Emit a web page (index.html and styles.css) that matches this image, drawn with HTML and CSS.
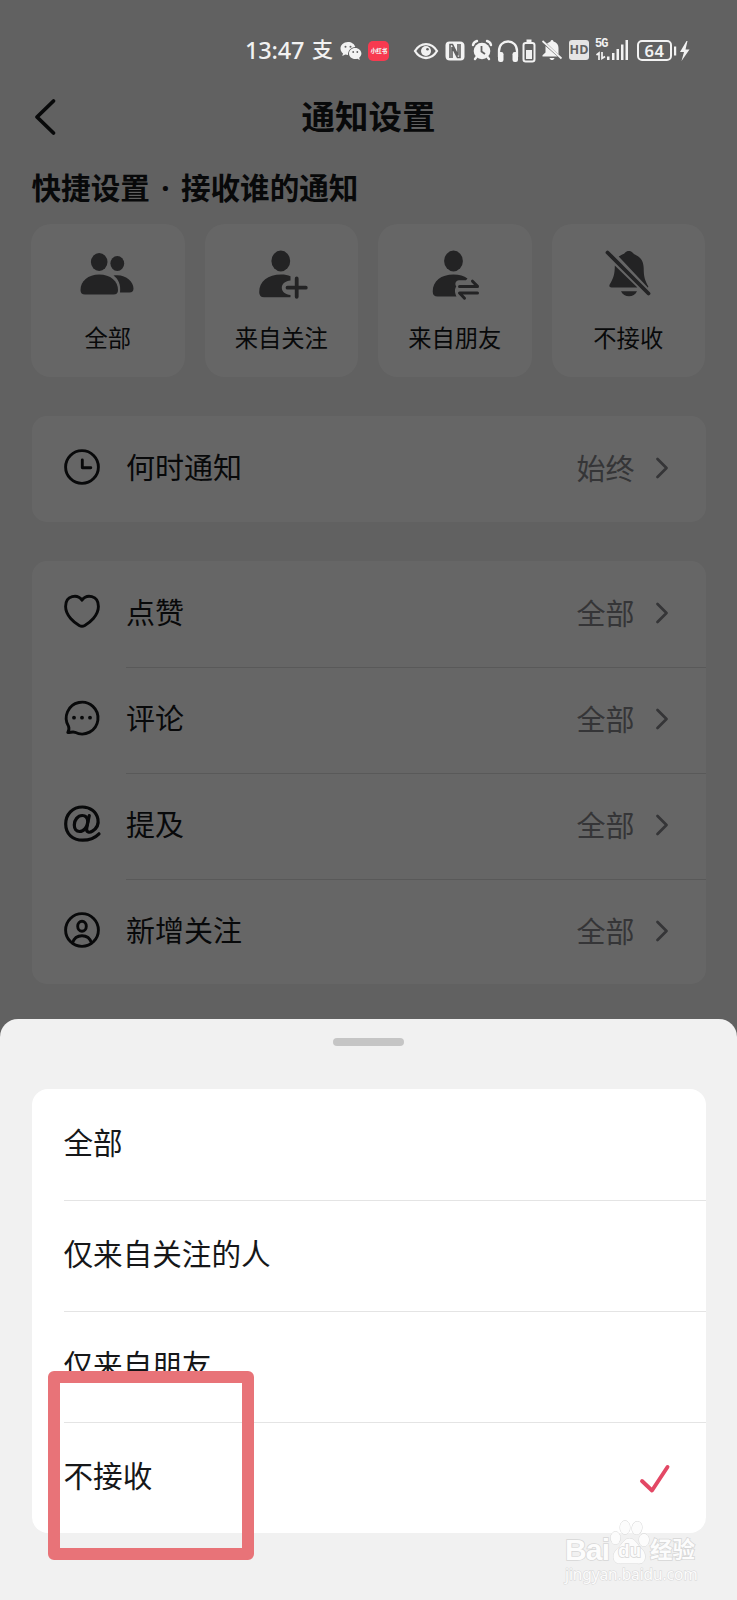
FILE: index.html
```html
<!DOCTYPE html>
<html lang="zh-CN">
<head>
<meta charset="utf-8">
<title>通知设置</title>
<link rel="stylesheet" href="styles.css">
</head>
<body>
<main class="screen">
  <div class="page">
    <header class="nav">
      <svg class="back" width="22" height="38" viewBox="0 0 22 38"><path d="M19.500 3 3 19l16.500 16"/></svg>
      <h1 class="title">通知设置</h1>
    </header>
    <h2 class="section">快捷设置<span class="dot">·</span>接收谁的通知</h2>
    <div class="quick">
      <div class="tile">
        <svg class="glyph" width="60" height="56" viewBox="0 0 60 56">
          <ellipse cx="22.200" cy="17" rx="8.300" ry="9"/><ellipse cx="40.300" cy="18.500" rx="6.900" ry="7.600"/>
          <path d="M22.200 29.500C11 29.500 3.500 36 3.500 45q0 4.500 4.500 4.500h28.500q4.500 0 4.500-4.500C41 36 33.500 29.500 22.200 29.500Z"/>
          <path d="M36.500 30.500C48 28.500 56.500 36 56.500 43.500q0 4-4 4h-9.500c1-7.500-1.500-13.500-6.500-17Z"/>
        </svg>
        <span class="tile-label">全部</span>
      </div>
      <div class="tile">
        <svg class="glyph" width="60" height="56" viewBox="0 0 60 56">
          <ellipse cx="29.800" cy="16" rx="9.400" ry="10.400"/>
          <path d="M30 29.500c4 0 7 .6 9.500 1.800v4.200c-5 .5-8.700 3.300-8.700 7.200s3.700 6.800 8.700 7.300v2.200H13q-4.800 0-4.800-5C8.200 36 17 29.500 30 29.500Z"/>
          <path class="line" d="M36.500 42.700h18.300M45.700 33.500v18.300"/>
        </svg>
        <span class="tile-label">来自关注</span>
      </div>
      <div class="tile">
        <svg class="glyph" width="60" height="56" viewBox="0 0 60 56">
          <ellipse cx="29.500" cy="16" rx="9.400" ry="10.400"/>
          <path d="M29.500 29.500c6 0 10.500 1.500 14 4l-1.500 1.800h-7c-3.500 0-4.500 4-2.700 6.200-2 2.500-1.500 6.500.2 10H13.500q-4.800 0-4.800-5c0-10.500 8.500-17 20.800-17Z"/>
          <path class="thin" d="M35.500 41.400h18l-5-5.200M53.500 48h-18l5 5.200"/>
        </svg>
        <span class="tile-label">来自朋友</span>
      </div>
      <div class="tile">
        <svg class="glyph" width="60" height="56" viewBox="0 0 60 56">
          <path d="M20.700 11.500c3-1.900 5-2.300 6.300-3.800 1.700-2.300 6-2.300 7.700 0 1 1.300 2 1.900 4 2.700 4.700 2.300 7 7 7 12.800 0 8 1 11.800 4.600 18.300l-.3 1.200ZM16.800 20.500l22.600 22H13.500c-2 0-2.700-1.500-1.700-3.200 3.600-6 5-9.800 5-18.800ZM23 46.300h16c-1.500 3.300-4.500 5-8 5s-6.500-1.700-8-5Z"/>
          <path class="line" d="M9.500 7.500l41 41"/>
        </svg>
        <span class="tile-label">不接收</span>
      </div>
    </div>
    <section class="group">
      <div class="row">
        <svg class="icon" width="38" height="38" viewBox="0 0 38 38"><circle cx="19" cy="19" r="16.400"/><path d="M19.300 12v7.800h8.500"/></svg>
        <div class="row-body"><span>何时通知</span><span class="value">始终</span><svg class="chevron" width="14" height="24" viewBox="0 0 14 24"><path d="M2.500 3l9 9-9 9"/></svg></div>
      </div>
    </section>
    <section class="group">
      <div class="row">
        <svg class="icon" width="38" height="38" viewBox="0 0 38 38"><path d="M19 7.200C14.500.8 2.600 2 2.600 13.500c0 9.300 9 16.300 13.600 19q2.800 1.600 5.600 0c4.600-2.700 13.600-9.700 13.600-19C35.400 2 23.500.8 19 7.200Z"/></svg>
        <div class="row-body"><span>点赞</span><span class="value">全部</span><svg class="chevron" width="14" height="24" viewBox="0 0 14 24"><path d="M2.500 3l9 9-9 9"/></svg></div>
      </div>
      <div class="row">
        <svg class="icon" width="38" height="38" viewBox="0 0 38 38"><path d="M4.800 33.600c1.300-2.200 1.600-4 .7-6.300A15.900 15.900 0 1 1 12 33.300c-2.300-.9-4.500.3-7.200.3Z"/><g class="dots"><circle cx="11" cy="18.700" r="1.900"/><circle cx="19" cy="18.700" r="1.900"/><circle cx="27" cy="18.700" r="1.900"/></g></svg>
        <div class="row-body"><span>评论</span><span class="value">全部</span><svg class="chevron" width="14" height="24" viewBox="0 0 14 24"><path d="M2.500 3l9 9-9 9"/></svg></div>
      </div>
      <div class="row">
        <svg class="icon at" width="38" height="38" viewBox="0 0 38 38"><path d="M26.300 10.500l-2.600 12.700c-.7 4.500 3 4.800 5.700 3 4-2.600 6.500-7.300 5.500-12.200C33.500 6.500 27 2 19.500 2 9.500 2 2.700 9.500 2.700 19c0 10 7 16.200 17 16.200 6.500 0 12-2 16.300-6.400"/><path d="M24.800 16.500c-.3-3.800-2.500-6-5.500-6-4.600 0-8 4.500-8 9.500 0 4 2 6.500 5.200 6.500 4.300 0 8-4.300 8.300-10Z"/></svg>
        <div class="row-body"><span>提及</span><span class="value">全部</span><svg class="chevron" width="14" height="24" viewBox="0 0 14 24"><path d="M2.500 3l9 9-9 9"/></svg></div>
      </div>
      <div class="row">
        <svg class="icon" width="38" height="38" viewBox="0 0 38 38"><circle cx="19" cy="19" r="16.400"/><ellipse cx="19" cy="15.300" rx="4.300" ry="5"/><path d="M9.500 32c1.500-5 4.500-7.300 9.500-7.300s8 2.300 9.500 7.300"/></svg>
        <div class="row-body"><span>新增关注</span><span class="value">全部</span><svg class="chevron" width="14" height="24" viewBox="0 0 14 24"><path d="M2.500 3l9 9-9 9"/></svg></div>
      </div>
    </section>
  </div>
  <div class="dim"></div>

  <div class="status">
    <span class="time">13:47</span>
    <span class="pay">支</span>
    <svg class="wechat" width="22" height="20" viewBox="0 0 22 20"><path fill="#f2f2f2" d="M8 1C3.500 1 .5 4 .5 7.500c0 2 1 3.700 2.500 4.900l-.7 2.600 3-1.400c.8.300 1.800.4 2.700.4C7.800 9.500 11 6.200 15.300 6 14.500 3 11.500 1 8 1Z"/><path fill="#f2f2f2" d="M15.200 7C11.500 7 9 9.500 9 12.500S11.700 18 15.200 18c.8 0 1.500-.1 2.200-.3l2.400 1.200-.6-2.200c1.300-1 2.200-2.500 2.200-4.200C21.400 9.500 18.700 7 15.200 7Z"/><g fill="#616161"><circle cx="5.500" cy="5.800" r="1"/><circle cx="10.500" cy="5.800" r="1"/><circle cx="13.200" cy="11" r=".9"/><circle cx="17.300" cy="11" r=".9"/></g></svg>
    <span class="app"><span class="app-text">小红书</span></span>
    <svg class="eye" width="26" height="20" viewBox="0 0 26 20"><path fill="none" stroke="#f2f2f2" stroke-width="2.300" d="M2 10C7.500.7 18.500.7 24 10c-5.500 9.300-16.500 9.300-22 0Z"/><circle cx="13" cy="10" r="5" fill="#f2f2f2"/><circle cx="14.500" cy="8.300" r="1.300" fill="#616161"/></svg>
    <svg class="nfc" width="20" height="20" viewBox="0 0 20 20"><path fill="#f2f2f2" d="M4.500.5H15q4.500 0 4.500 4.500v10.500q0 4-4 4H5Q.5 19.500.5 15V4.500q0-4 4-4Z"/><path fill="none" stroke="#616161" stroke-width="1.600" d="M5 17V3.500h2.500l5.500 11V3M15 3v13.500h-2.500L7 6v11"/></svg>
    <svg class="alarm" width="22" height="22" viewBox="0 0 22 22"><circle cx="11" cy="12" r="8.300" fill="#f2f2f2"/><path fill="none" stroke="#f2f2f2" stroke-width="2.400" stroke-linecap="round" d="M2 6C2.500 4 4 2.500 6 2M20 6c-.5-2-2-3.500-4-4M5.500 18 4 20M16.500 18l1.500 2"/><path fill="none" stroke="#616161" stroke-width="1.800" d="M10.500 7v5.500l3.500 2.500"/></svg>
    <svg class="phones" width="22" height="24" viewBox="0 0 22 24"><path fill="none" stroke="#f2f2f2" stroke-width="2.300" d="M2 18v-6C2 6 6 2.500 11 2.500S20 6 20 12v6"/><rect x="1" y="13" width="5.500" height="10" rx="2.200" fill="#f2f2f2"/><rect x="15.500" y="13" width="5.500" height="10" rx="2.200" fill="#f2f2f2"/></svg>
    <svg class="cell" width="14" height="24" viewBox="0 0 14 24"><rect x="1.500" y="4" width="11" height="18.500" rx="2.200" fill="none" stroke="#f2f2f2" stroke-width="2"/><path fill="#f2f2f2" d="M4.500.5h5V3h-5zM4 11h6v9H4z"/></svg>
    <svg class="mute" width="22" height="22" viewBox="0 0 22 22"><path fill="#f2f2f2" d="M6 4.500 9.500 2.500C9.800.5 12.200.5 12.500 2.500 16 3.500 17.500 6 17.500 9v6.500ZM4.500 7l12 10.500h-15v-1.300l3-2.700ZM8.500 19h5c-.8 2.700-4.200 2.700-5 0Z"/><path stroke="#f2f2f2" stroke-width="1.700" d="M1.500 2l19 17.500"/></svg>
    <span class="hd">HD</span>
    <span class="network"><span class="fiveg">5G</span><svg width="34" height="22" viewBox="0 0 34 22"><path fill="#f2f2f2" d="M12 17.500h2.500V21H12zM17 14h2.500v7H17zM21.500 10H24v11h-2.500zM26 5.500h2.500V21H26zM30.500 1H33v20h-2.500z"/><path fill="none" stroke="#f2f2f2" stroke-width="1.700" d="M1.500 16 4 14v7M7 13v6.500l3-2"/></svg></span>
    <span class="battery">64</span>
    <svg class="bolt" width="16" height="22" viewBox="0 0 16 22"><path fill="#f2f2f2" d="M0 6.500h2.200v9H0zM12.500 1 6 12h4L7.500 21 15.500 9.500h-4L13.500 1Z"/></svg>
  </div>

  <section class="sheet">
    <div class="handle"></div>
    <div class="options">
      <div class="option">全部</div>
      <div class="option">仅来自关注的人</div>
      <div class="option">仅来自朋友</div>
      <div class="option">不接收<svg class="check" width="32" height="30" viewBox="0 0 32 30"><path d="M3 17l10 9.500L28.500 3"/></svg></div>
    </div>
  </section>
  <div class="highlight"></div>
  <div class="watermark">
    <div class="brand"><span class="bai">Bai</span><span class="paw"><svg width="40" height="46" viewBox="0 0 40 46"><g fill="#fcfcfc" stroke="#d9d9d9"><ellipse cx="5.500" cy="19" rx="4.800" ry="6.300"/><ellipse cx="15" cy="8.500" rx="5" ry="6.800"/><ellipse cx="27" cy="9" rx="5" ry="6.500" transform="rotate(10 27 9)"/><ellipse cx="34" cy="21" rx="5" ry="6.300"/><path d="M19.500 19.500c5 0 7 4.500 10 8s6 5.500 5.500 11-4 6.500-8 6H12c-5 .5-8-1.500-8.500-6s3-8 6-11 5-8 10-8Z"/></g></svg><span class="du">du</span></span><span class="cn">经验</span></div>
    <div class="url">jingyan.baidu.com</div>
  </div>
</main>
</body>
</html>
```
FILE: styles.css
```css
* { box-sizing: border-box; }
body { margin: 0; font-family: "Noto Sans CJK SC", sans-serif; }
svg { display: block; flex: none; overflow: visible; }

.screen { position: relative; width: 737px; height: 1600px; overflow: hidden; background: #f2f2f2; color: #161719; }
.page { height: 1600px; padding: 87px 31.500px 0 31.500px; }
.dim { position: absolute; inset: 0; background: rgba(0, 0, 0, .6); }

.nav { display: grid; grid-template-columns: 60px 1fr 60px; align-items: center; height: 60px; }
.back { margin-left: 2.500px; margin-bottom: 1px; fill: none; stroke: #161719; stroke-width: 3.800; stroke-linecap: round; stroke-linejoin: round; }
.title { margin: 0; padding-bottom: 4px; text-align: center; font-size: 33.500px; line-height: 56px; font-weight: 700; }
.section { margin: 17px 0 0; height: 46px; line-height: 46px; font-size: 29.600px; font-weight: 700; }
.dot { display: inline-block; width: 31px; font-family: "Noto Sans", sans-serif; line-height: 1; text-align: center; }

.quick { display: grid; grid-template-columns: repeat(4, 1fr); gap: 20px; margin: 14px .5px 0 -.5px; }
.tile { display: flex; flex-direction: column; align-items: center; height: 153px; padding-top: 21px; border-radius: 20px; background: #fff; }
.glyph { margin-left: -1px; margin-bottom: 18px; fill: #57575b; }
.glyph .line, .glyph .thin { fill: none; stroke: #57575b; stroke-width: 3.800; stroke-linecap: round; stroke-linejoin: round; }
.glyph .thin { stroke-width: 3; }
.tile-label { font-size: 23.300px; line-height: 36px; }

.group { margin-top: 39px; border-radius: 15px; background: #fff; overflow: hidden; }
.row { display: flex; align-items: center; height: 105.900px; padding-left: 31.500px; }
.icon { margin-bottom: 3px; fill: none; stroke: #161719; stroke-width: 2.900; stroke-linecap: round; stroke-linejoin: round; }
.icon.at { stroke-width: 3.200; }
.dots { fill: #161719; stroke: none; }
.row-body { display: flex; align-items: center; flex: 1; height: 100%; margin-left: 25px; padding: 0 37px 6px 0; font-size: 29px; }
.row + .row .row-body { border-top: 1px solid #dedede; }
.value { margin-left: auto; margin-right: 20px; padding-top: 2px; color: #85868a; }
.chevron { margin-top: 4px; fill: none; stroke: #85868a; stroke-width: 2.800; stroke-linecap: round; stroke-linejoin: round; }

.status { position: absolute; top: 30px; left: 245px; display: flex; align-items: center; height: 41px; color: #f2f2f2; }
.time { width: 67px; font: 500 23.500px/41px "Noto Sans", sans-serif; letter-spacing: -.2px; }
.pay { width: 28px; padding-bottom: 5px; font-size: 21px; line-height: 36px; font-weight: 500; }
.app { display: flex; align-items: center; justify-content: center; width: 21px; height: 20px; margin-left: 6px; border-radius: 5px; background: #f83a50; }
.app-text { flex: none; font-size: 12px; line-height: 18px; font-weight: 900; transform: scale(.46); }
.eye { margin-left: 24px; }
.nfc { margin-left: 6px; }
.alarm { margin-left: 6px; margin-bottom: 1px; }
.phones { margin-left: 4px; }
.cell { margin-left: 3px; }
.mute { margin-left: 5px; margin-bottom: 2px; }
.hd { width: 20px; height: 20px; margin-left: 6px; margin-bottom: 2px; border-radius: 3px; background: #e5e5e5; color: #616161; font: 700 12.500px/20px "Open Sans", sans-serif; text-align: center; }
.network { position: relative; margin-left: 6px; margin-bottom: 2px; }
.fiveg { position: absolute; left: 0; top: -1px; font: 700 12px/12px "Liberation Mono", monospace; letter-spacing: -1px; }
.battery { width: 35px; height: 21px; margin-left: 8px; border: 2px solid #f2f2f2; border-radius: 5px; font: 600 16.500px/17px "Noto Sans", sans-serif; letter-spacing: .5px; text-align: center; }
.bolt { margin-left: 2px; }

.sheet { position: absolute; left: 0; right: 0; top: 1018.500px; bottom: 0; padding: 19.500px 31.500px 0 31.500px; border-radius: 18px 18px 0 0; background: #f1f1f1; }
.handle { width: 71px; height: 8px; margin: 0 auto; border-radius: 4px; background: #c5c5c5; }
.options { margin-top: 43px; padding-left: 32px; border-radius: 16px; background: #fff; }
.option { display: flex; align-items: center; height: 111px; padding-bottom: 7px; font-size: 29.600px; }
.option + .option { border-top: 1.500px solid #e4e4e4; }
.check { margin: 8px 35px 0 auto; fill: none; stroke: #e34865; stroke-width: 3.900; stroke-linecap: round; stroke-linejoin: round; }
.highlight { position: absolute; left: 48px; top: 1370.500px; width: 206px; height: 189px; border: 12px solid #e87378; border-radius: 6px; }

.watermark { position: absolute; left: 565px; top: 1519px; width: 140px; color: #fcfcfc; -webkit-text-stroke: 1.500px #d6d6d6; paint-order: stroke fill; }
.brand { display: flex; align-items: flex-end; height: 46px; }
.bai { width: 45px; font: 700 30px/30px "Liberation Sans", sans-serif; letter-spacing: -.8px; }
.paw { position: relative; width: 40px; }
.du { position: absolute; left: 8px; top: 22px; font: 700 19px/20px "Liberation Sans", sans-serif; }
.cn { padding-bottom: 2px; font-size: 22.500px; line-height: 30px; font-weight: 700; }
.url { font: 15.500px/18px "Noto Sans", sans-serif; letter-spacing: -.1px; -webkit-text-stroke-width: 1px; }
```
